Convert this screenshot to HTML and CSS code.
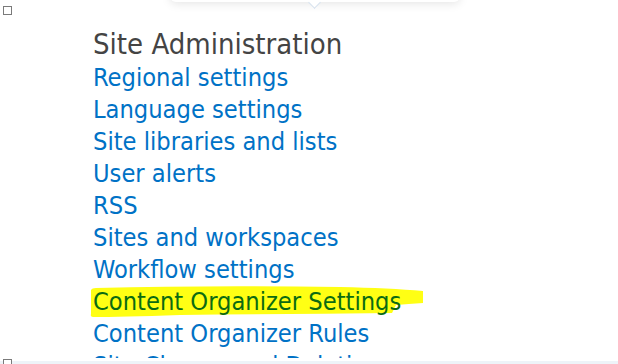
FILE: index.html
```html
<!DOCTYPE html>
<html>
<head>
<meta charset="utf-8">
<title>Site Settings</title>
<link rel="stylesheet" href="styles.css">
</head>
<body>

<div class="callout"><span class="callout-tip"></span></div>

<span class="box box-top"></span>

<div class="group">
	<h3 class="group-title">Site Administration</h3>
	<ul class="links">
		<li><a href="#">Regional settings</a></li>
		<li><a href="#">Language settings</a></li>
		<li><a href="#">Site libraries and lists</a></li>
		<li><a href="#">User alerts</a></li>
		<li><a href="#">RSS</a></li>
		<li><a href="#">Sites and workspaces</a></li>
		<li><a href="#">Workflow settings</a></li>
		<li class="marked">
			<svg class="marker" width="334" height="31" viewBox="0 0 334 31">
				<path d="M1 4 Q2 2 6 2 Q120 -1 250 1 Q300 2 333 5 L333 17 Q318 18 306 19 L302 27 Q200 28 90 29 Q30 31 3 31 Q0 31 1 28 Z" fill="#ffff14"/>
			</svg>
			<a href="#">Content Organizer Settings</a>
		</li>
		<li><a href="#">Content Organizer Rules</a></li>
		<li><a href="#">Site Closure and Deletion</a></li>
	</ul>
</div>

<div class="bottom-bar"><span class="box"></span></div>

</body>
</html>
```

FILE: styles.css
```css
body {
	margin: 0;
	background-color: #fff;
	font-family: "DejaVu Sans Condensed", "DejaVu Sans", sans-serif;
	overflow: hidden;
	height: 364px;
	position: relative;
}

.box {
	display: block;
	width: 7px;
	height: 7px;
	border: 1px solid #7a7a7a;
	background: #fff;
}
.box-top {
	margin: 6px 0 0 3px;
}

.callout {
	position: absolute;
	top: -20px;
	left: 170px;
	width: 290px;
	height: 22px;
	background: #fff;
	border-radius: 0 0 6px 6px;
	box-shadow: 0 2px 10px rgba(0,0,0,0.10);
}
.callout-tip {
	position: absolute;
	left: 140px;
	bottom: -5px;
	width: 8px;
	height: 8px;
	background: #fff;
	border-right: 1px solid #d3dfec;
	border-bottom: 1px solid #d3dfec;
	transform: rotate(45deg);
}

.group {
	padding-left: 93px;
	margin-top: 11px;
}
.group-title {
	margin: 0;
	font-weight: normal;
	font-size: 29px;
	line-height: 36px;
	color: #444;
}
.links {
	list-style: none;
	margin: 0;
	padding: 0;
}
.links li {
	font-size: 25.2px;
	line-height: 32px;
	height: 32px;
	white-space: nowrap;
}
.links a {
	position: relative;
	color: #0072c6;
	text-decoration: none;
}

.marked {
	position: relative;
}
.marked a {
	color: #0b6b12;
}
.marker {
	position: absolute;
	left: -3px;
	top: 0;
}

.bottom-bar {
	position: absolute;
	left: 0;
	right: 0;
	bottom: 0;
	height: 6px;
	background: linear-gradient(#fff 0, #fff 3px, #eef3f8 3px);
	padding-left: 3px;
}
.bottom-bar .box {
	margin-top: 1px;
}
```
